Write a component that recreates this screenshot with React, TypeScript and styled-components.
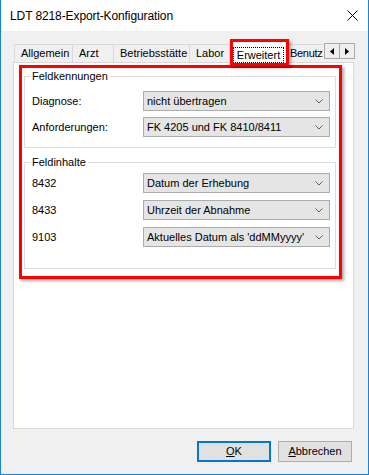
import React from 'react';
import styled, { createGlobalStyle } from 'styled-components';

const GlobalStyle = createGlobalStyle`
  html, body { margin: 0; padding: 0; background: #ffffff; }
  body {
    font-family: "Liberation Sans", Arial, sans-serif;
    font-size: 11px;
    color: #000000;
  }
  * { box-sizing: border-box; }
`;

const Window = styled.div`
  width: 369px;
  height: 475px;
  display: flex;
  flex-direction: column;
  background: #f0f0f0;
  border: 1px solid #1883d7;
  border-top: none;
`;

const TitleBar = styled.div`
  flex: none;
  height: 31px;
  background: #ffffff;
  display: flex;
  align-items: center;
  justify-content: space-between;
  padding-left: 9px;
`;

const Title = styled.span`
  font-size: 12px;
  letter-spacing: -0.1px;
`;

const CloseButton = styled.div`
  width: 31px;
  height: 31px;
  display: flex;
  align-items: center;
  justify-content: center;
`;

const Body = styled.div`
  flex: 1;
  min-height: 0;
  display: flex;
  flex-direction: column;
  padding: 10px 14px 12px 12px;
`;

const TabStrip = styled.div`
  flex: none;
  height: 21px;
  display: flex;
  align-items: flex-end;
  padding-left: 1px;
  position: relative;
  z-index: 1;
`;

const Tab = styled.div<{ $w: number; $selected?: boolean; $pad?: number; $tight?: boolean }>`
  flex: none;
  width: ${(p) => p.$w}px;
  height: ${(p) => (p.$selected ? 22 : 18)}px;
  margin-bottom: ${(p) => (p.$selected ? -1 : 0)}px;
  padding-left: ${(p) => p.$pad ?? 6}px;
  background: ${(p) => (p.$selected ? '#ffffff' : '#f0f0f0')};
  border: 1px solid #d9d9d9;
  border-bottom: none;
  border-right: ${(p) => (p.$selected ? '1px solid #d9d9d9' : 'none')};
  border-left: ${(p) => (p.$tight ? 'none' : '1px solid #d9d9d9')};
  letter-spacing: ${(p) => (p.$tight ? '-0.3px' : '0')};
  line-height: 17px;
  white-space: nowrap;
  position: ${(p) => (p.$selected ? 'relative' : 'static')};
`;

const FocusRect = styled.div`
  margin: 5px 0 0 3px;
  width: 51px;
  height: 16px;
  border: 1px dotted #000000;
  display: flex;
  align-items: center;
  justify-content: center;
  line-height: 14px;
`;

const TabHighlight = styled.div`
  position: absolute;
  left: 0;
  top: -3px;
  width: 59px;
  height: 27px;
  border: 3px solid #ff0000;
  box-shadow: 2px 2px 3px rgba(0, 0, 0, 0.35);
  pointer-events: none;
`;

const Spinner = styled.div`
  margin-left: auto;
  margin-right: -1px;
  align-self: flex-start;
  margin-top: 2px;
  display: flex;
`;

const SpinButton = styled.div<{ $first?: boolean }>`
  width: 16px;
  height: 16px;
  margin-left: ${(p) => (p.$first ? 0 : -1)}px;
  background: #efefef;
  border: 1px solid #a9a9a9;
  display: flex;
  align-items: center;
  justify-content: center;
`;

const Panel = styled.div`
  flex: 1;
  min-height: 0;
  background: #ffffff;
  border: 1px solid #d9d9d9;
  padding: 2px 11px 0 5px;
`;

const RedFrame = styled.div`
  border: 3px solid #ff0000;
  box-shadow: 2px 2px 3px rgba(0, 0, 0, 0.35);
  padding: 2px 3px 7px 2px;
  display: flex;
  flex-direction: column;
  gap: 8px;
`;

const GroupBox = styled.fieldset<{ $pt: number; $pb: number; $gap: number }>`
  margin: 0;
  min-width: 0;
  border: 1px solid #dcdcdc;
  padding: ${(p) => p.$pt}px 5px ${(p) => p.$pb}px 7px;
  display: flex;
  flex-direction: column;
  gap: ${(p) => p.$gap}px;
`;

const GroupTitle = styled.legend`
  padding: 0 2px;
  margin-left: -2px;
  line-height: 13px;
  font-size: 11px;
`;

const Row = styled.div`
  display: grid;
  grid-template-columns: 111px 187px;
  align-items: center;
  height: 20px;
`;

const Label = styled.span`
  white-space: nowrap;
`;

const Combo = styled.div`
  height: 20px;
  background: #e5e5e5;
  border: 1px solid #acacac;
  display: flex;
  align-items: center;
  justify-content: space-between;
  padding: 0 6px 0 3px;
  white-space: nowrap;
`;

const Footer = styled.div`
  flex: none;
  margin-top: 12px;
  padding-right: 2px;
  display: flex;
  justify-content: flex-end;
  gap: 7px;
`;

const Button = styled.div<{ $default?: boolean }>`
  width: 74px;
  height: 21px;
  background: #e1e1e1;
  border: ${(p) => (p.$default ? '2px solid #0078d7' : '1px solid #adadad')};
  display: flex;
  align-items: center;
  justify-content: center;
  line-height: 1;
`;

const Mnemonic = styled.span`
  text-decoration: underline;
  text-underline-offset: 1px;
`;

const Chevron = () => (
  <svg width="8" height="5" viewBox="0 0 8 5">
    <polyline points="0.5,0.5 4,4 7.5,0.5" fill="none" stroke="#606060" strokeWidth="1" />
  </svg>
);

const ArrowLeft = () => (
  <svg width="4" height="7" viewBox="0 0 4 7">
    <polygon points="4,0 0,3.5 4,7" fill="#000" />
  </svg>
);

const ArrowRight = () => (
  <svg width="4" height="7" viewBox="0 0 4 7">
    <polygon points="0,0 4,3.5 0,7" fill="#000" />
  </svg>
);

const CloseIcon = () => (
  <svg width="11" height="11" viewBox="0 0 11 11">
    <line x1="0.5" y1="0.5" x2="10.5" y2="10.5" stroke="#000" strokeWidth="1" />
    <line x1="10.5" y1="0.5" x2="0.5" y2="10.5" stroke="#000" strokeWidth="1" />
  </svg>
);

type Field = { label: string; value: string };

const ids: Field[] = [
  { label: 'Diagnose:', value: 'nicht übertragen' },
  { label: 'Anforderungen:', value: 'FK 4205 und FK 8410/8411' },
];

const contents: Field[] = [
  { label: '8432', value: 'Datum der Erhebung' },
  { label: '8433', value: 'Uhrzeit der Abnahme' },
  { label: '9103', value: "Aktuelles Datum als 'ddMMyyyy'" },
];

const FieldRow = ({ label, value }: Field) => (
  <Row>
    <Label>{label}</Label>
    <Combo>
      <span>{value}</span>
      <Chevron />
    </Combo>
  </Row>
);

export default function App() {
  return (
    <>
      <GlobalStyle />
      <Window>
        <TitleBar>
          <Title>LDT 8218-Export-Konfiguration</Title>
          <CloseButton>
            <CloseIcon />
          </CloseButton>
        </TitleBar>
        <Body>
          <TabStrip>
            <Tab $w={58}>Allgemein</Tab>
            <Tab $w={41}>Arzt</Tab>
            <Tab $w={76}>Betriebsstätte</Tab>
            <Tab $w={40}>Labor</Tab>
            <Tab $w={59} $selected $pad={0}>
              <FocusRect>Erweitert</FocusRect>
              <TabHighlight />
            </Tab>
            <Tab $w={35} $pad={2} $tight>Benutz</Tab>
            <Spinner>
              <SpinButton $first>
                <ArrowLeft />
              </SpinButton>
              <SpinButton>
                <ArrowRight />
              </SpinButton>
            </Spinner>
          </TabStrip>
          <Panel>
            <RedFrame>
              <GroupBox $pt={8} $pb={10} $gap={6}>
                <GroupTitle>Feldkennungen</GroupTitle>
                {ids.map((f) => (
                  <FieldRow key={f.label} {...f} />
                ))}
              </GroupBox>
              <GroupBox $pt={4} $pb={21} $gap={7}>
                <GroupTitle>Feldinhalte</GroupTitle>
                {contents.map((f) => (
                  <FieldRow key={f.label} {...f} />
                ))}
              </GroupBox>
            </RedFrame>
          </Panel>
          <Footer>
            <Button $default>
              <span>
                <Mnemonic>O</Mnemonic>K
              </span>
            </Button>
            <Button>
              <span>
                <Mnemonic>A</Mnemonic>bbrechen
              </span>
            </Button>
          </Footer>
        </Body>
      </Window>
    </>
  );
}
